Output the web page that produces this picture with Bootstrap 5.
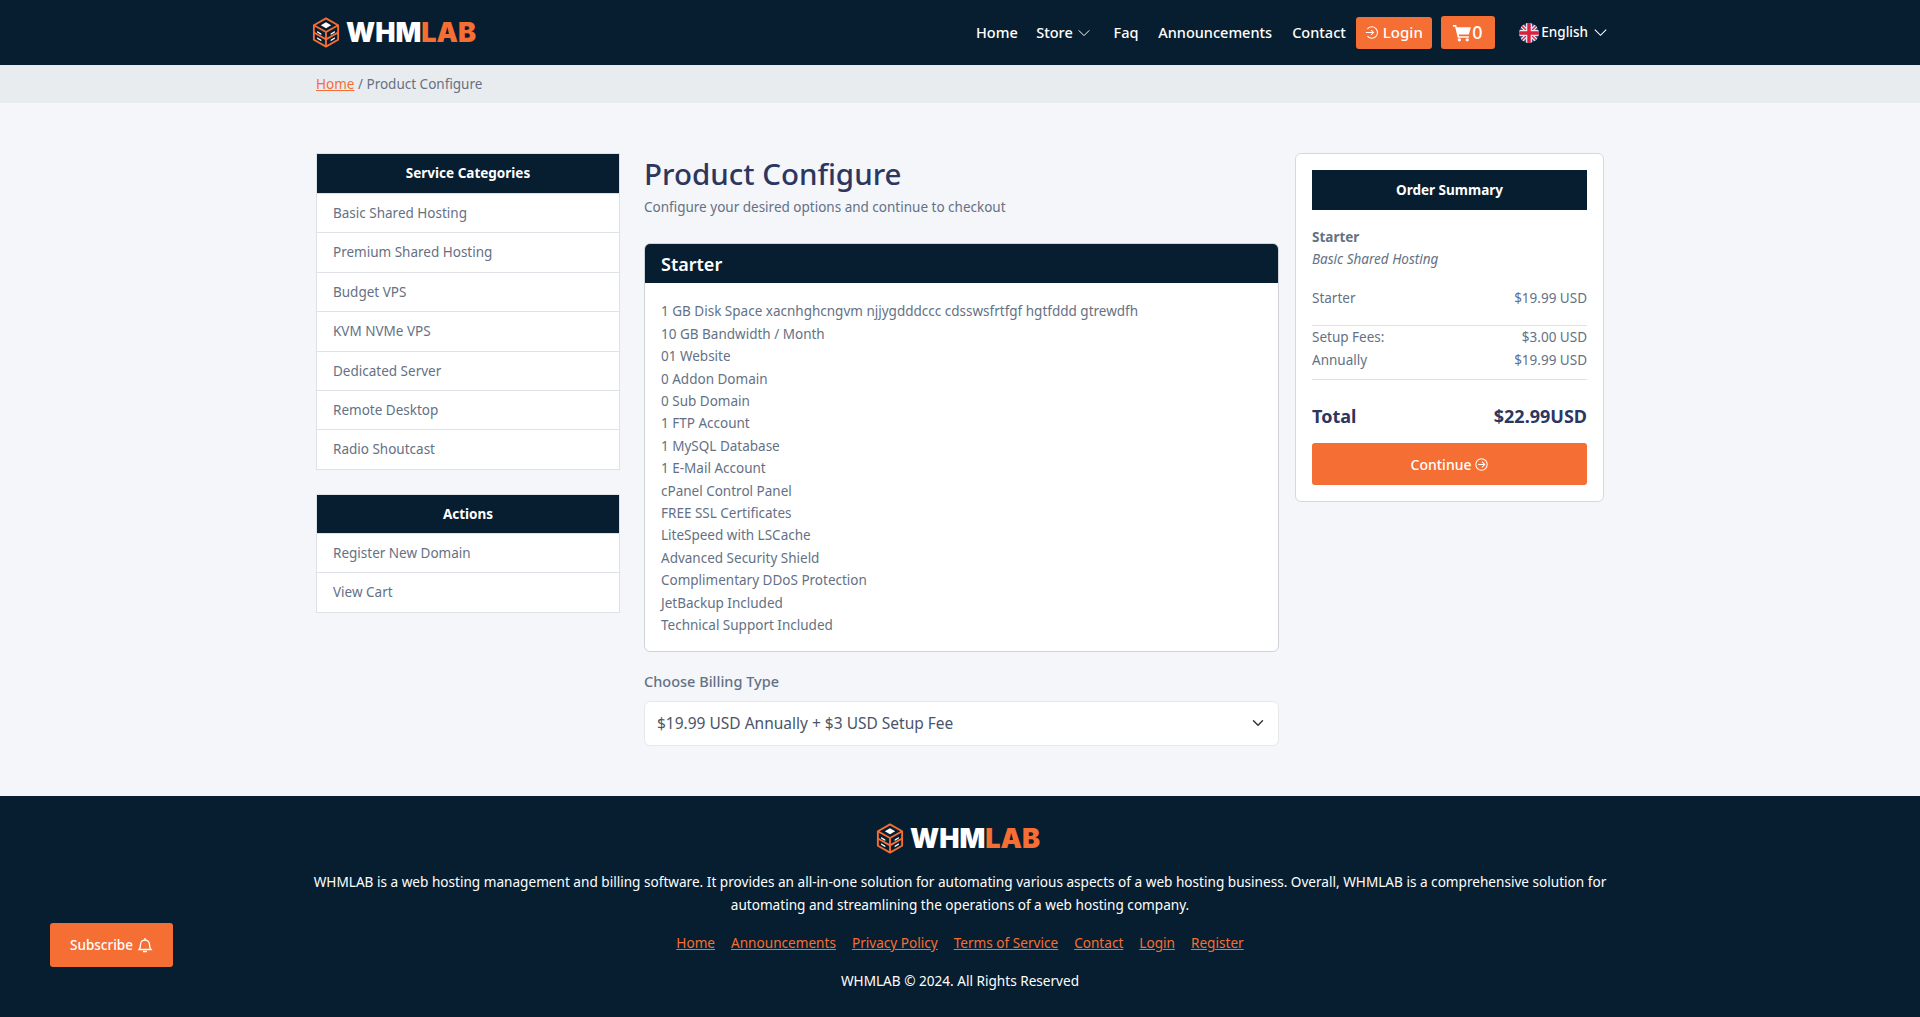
<!DOCTYPE html>
<html lang="en">
<head>
<meta charset="utf-8">
<title>Product Configure</title>
<link href="https://cdn.jsdelivr.net/npm/bootstrap@5.3.0/dist/css/bootstrap.min.css" rel="stylesheet">
<style>
:root{--navy:#071e30;--orange:#f56e33;--txt:#647185;--ttl:#2d3660;}
body{font-family:"Noto Sans","Liberation Sans",sans-serif;font-size:13.5px;line-height:22.4px;color:var(--txt);background:#f4f6fa;}
.wrap{width:1288px;margin:0 auto;}
.topbar{background:var(--navy);height:65px;}
.brand{font-family:"Inter","Liberation Sans",sans-serif;font-weight:900;font-size:27px;line-height:1;color:#fff;text-decoration:none;margin-left:-4px;}
.brand span{color:var(--orange);}
.brandtxt{margin-left:6px;}
.topnav{margin-right:-3px;}
.topnav a.lnk{color:#fff;text-decoration:none;font-size:14.5px;font-weight:500;}
.topnav a.navhome{margin-right:18.5px;}
.topnav a.navstore{margin-right:22.5px;}
.topnav a.navfaq{margin-right:19.7px;}
.topnav a.navann{margin-right:20px;}
.storechev{margin-left:4.3px;}
.btn-org{background:var(--orange);color:#fff;border:0;border-radius:3px;font-weight:500;font-size:15px;padding:0;}
.btn-org:hover{background:var(--orange);color:#fff;}
.navlogin{width:76px;height:32px;margin-left:10px;}
.navlogin svg{margin-right:5px;}
.navcart{width:54px;height:33px;margin-left:9px;font-size:18px;}
.topnav a.navlang{margin-left:24px;font-size:13.5px;}
.flag{margin-right:2.5px;}
.langchev{margin-left:6px;}
.crumb{background:#e9ecef;height:38px;}
.crumb a{color:var(--orange);}
.content{padding:50px 0;}
.cols{display:flex;align-items:flex-start;}
.side{width:304px;margin-right:24px;}
.mid{width:635px;margin-right:16px;}
.sum{width:309px;}
.sidecard{border-radius:0;border:1px solid #dee2e6;margin-bottom:24px;}
.sidehead{background:var(--navy);color:#fff;font-weight:700;text-align:center;height:39px;border-radius:0;}
.sidecard.mb-0 .sidehead{height:38px;}
.sidecard .list-group-item{padding:8px 16px;color:var(--txt);font-size:13.5px;border-color:#dee2e6;}
.pagetitle{font-size:29.5px;line-height:38px;font-weight:500;color:var(--ttl);margin:2px 0 3px;}
.subtitle{margin-bottom:25px;}
.prodcard{border:1px solid #cfd3d8;border-radius:6px;overflow:hidden;margin-bottom:18px;}
.prodhead{background:var(--navy);color:#fff;font-weight:600;font-size:18px;height:39px;padding:0 16px;border-radius:0;}
.prodbody{padding:17px 16px 14px;}
.billing{font-weight:500;font-size:14.5px;margin-bottom:9px;display:block;}
.billsel{height:45px;border:1px solid #e6e8ec;border-radius:6px;color:#4a5568;font-size:15.5px;padding-left:12px;}
.sumcard{border:1px solid #d5d8dd;border-radius:6px;padding:16px;height:349px;}
.sumhead{background:var(--navy);color:#fff;font-weight:700;height:40px;margin-bottom:16px;}
.sumname{font-weight:700;}
.rule{border-top:1px solid #dfe1e5;}
.total{font-size:18px;font-weight:700;color:var(--ttl);line-height:29px;margin:22px 0 12px;}
.contbtn{height:42px;width:100%;font-size:14px;}
.site-foot{background:var(--navy);color:#fff;height:221px;padding-top:27px;text-align:center;font-size:13.6px;}
.footp{margin:11px -8px 16px;}
.flinks{gap:16px;margin-bottom:15px;}
.flinks a{color:var(--orange);}
.subscribe{position:fixed;left:50px;top:923px;width:123px;height:44px;font-size:13.5px;}
svg{flex-shrink:0;}
</style>
</head>
<body>
<nav class="topbar">
 <div class="wrap d-flex align-items-center justify-content-between h-100">
  <a class="brand d-flex align-items-center" href="#">
   <svg width="28" height="31" viewBox="0 0 30 32" preserveAspectRatio="none" fill="none" stroke="#f56e33" stroke-width="2" stroke-linejoin="round"><path d="M15 1.5 28 8.5V23.5L15 30.5 2 23.5V8.5Z"/><path d="M2 8.5 15 15.5 28 8.5M15 15.5V30.5M2 16 15 23 28 16"/><path d="M15 5.5 20.5 8.5 15 11.5 9.5 8.5Z" fill="#fff" stroke="none"/><path d="M5.5 14.500 10 17V18.500L5.500 16ZM5.500 21 10 23.500V25L5.500 22.500ZM24.500 14.500 20 17V18.500L24.500 16ZM24.500 21 20 23.500V25L24.500 22.500Z" fill="#fff" stroke="none"/></svg>
   <div class="brandtxt">WHM<span>LAB</span></div>
  </a>
  <div class="topnav d-flex align-items-center">
   <a class="lnk navhome" href="#">Home</a>
   <a class="lnk navstore d-flex align-items-center" href="#">Store<svg class="storechev" width="14" height="14" viewBox="0 0 16 16" fill="none" stroke="#fff" stroke-width="1.100"><path d="M2 5l6 6 6-6"/></svg></a>
   <a class="lnk navfaq" href="#">Faq</a>
   <a class="lnk navann" href="#">Announcements</a>
   <a class="lnk" href="#">Contact</a>
   <a class="btn btn-org d-flex align-items-center justify-content-center navlogin" href="#"><svg width="13" height="13" viewBox="0 0 16 16" fill="none" stroke="#fff" stroke-width="1.300"><path d="M3 3.500A7 7 0 1 1 3 12.500M1 8h9M7.500 5l3 3-3 3"/></svg>Login</a>
   <a class="btn btn-org d-flex align-items-center justify-content-center navcart" href="#"><svg width="19" height="18" viewBox="0 0 18 17" fill="#fff"><path d="M0 1h3l.6 2H17l-2 7H5.500l.4 1.500H15V13H4.500L2 2.500H0Z"/><circle cx="6" cy="15" r="1.600"/><circle cx="13.500" cy="15" r="1.600"/></svg>0</a>
   <a class="lnk d-flex align-items-center navlang" href="#"><svg class="flag" width="20" height="20" viewBox="0 0 20 20"><defs><clipPath id="c"><circle cx="10" cy="10" r="10"/></clipPath></defs><g clip-path="url(#c)"><rect width="20" height="20" fill="#3a4f8f"/><path d="M0 0 20 20M20 0 0 20" stroke="#e8e8ee" stroke-width="4"/><path d="M0 0 20 20M20 0 0 20" stroke="#d8304a" stroke-width="1.300"/><path d="M10 0V20M0 10H20" stroke="#e8e8ee" stroke-width="6"/><path d="M10 0V20M0 10H20" stroke="#d8203f" stroke-width="3.400"/></g></svg><span>English</span><svg class="langchev" width="13" height="13" viewBox="0 0 16 16" fill="none" stroke="#fff" stroke-width="1.300"><path d="M1 4.500l7 7 7-7"/></svg></a>
  </div>
 </div>
</nav>
<div class="crumb"><div class="wrap d-flex align-items-center h-100"><span><a href="#">Home</a> / Product Configure</span></div></div>
<main class="content">
 <div class="wrap cols">
  <aside class="side">
   <div class="card sidecard">
    <div class="sidehead d-flex align-items-center justify-content-center">Service Categories</div>
    <div class="list-group list-group-flush">
     <a class="list-group-item" href="#">Basic Shared Hosting</a>
     <a class="list-group-item" href="#">Premium Shared Hosting</a>
     <a class="list-group-item" href="#">Budget VPS</a>
     <a class="list-group-item" href="#">KVM NVMe VPS</a>
     <a class="list-group-item" href="#">Dedicated Server</a>
     <a class="list-group-item" href="#">Remote Desktop</a>
     <a class="list-group-item" href="#">Radio Shoutcast</a>
    </div>
   </div>
   <div class="card sidecard mb-0">
    <div class="sidehead d-flex align-items-center justify-content-center">Actions</div>
    <div class="list-group list-group-flush">
     <a class="list-group-item" href="#">Register New Domain</a>
     <a class="list-group-item" href="#">View Cart</a>
    </div>
   </div>
  </aside>
  <section class="mid">
   <h1 class="pagetitle">Product Configure</h1>
   <p class="subtitle">Configure your desired options and continue to checkout</p>
   <div class="card prodcard">
    <div class="prodhead d-flex align-items-center">Starter</div>
    <div class="prodbody">
     1 GB Disk Space xacnhghcngvm njjygdddccc cdsswsfrtfgf hgtfddd gtrewdfh<br>10 GB Bandwidth / Month<br>01 Website<br>0 Addon Domain<br>0 Sub Domain<br>1 FTP Account<br>1 MySQL Database<br>1 E-Mail Account<br>cPanel Control Panel<br>FREE SSL Certificates<br>LiteSpeed with LSCache<br>Advanced Security Shield<br>Complimentary DDoS Protection<br>JetBackup Included<br>Technical Support Included
    </div>
   </div>
   <label class="billing" for="bill">Choose Billing Type</label>
   <select id="bill" class="form-select billsel"><option>$19.99 USD Annually + $3 USD Setup Fee</option></select>
  </section>
  <aside class="sum">
   <div class="card sumcard">
    <div class="sumhead d-flex align-items-center justify-content-center">Order Summary</div>
    <div class="sumname">Starter</div>
    <div class="fst-italic mb-3">Basic Shared Hosting</div>
    <div class="d-flex justify-content-between pb-3"><span>Starter</span><span>$19.99 USD</span></div>
    <div class="rule d-flex justify-content-between"><span>Setup Fees:</span><span>$3.00 USD</span></div>
    <div class="d-flex justify-content-between pb-2"><span>Annually</span><span>$19.99 USD</span></div>
    <div class="rule"></div>
    <div class="total d-flex justify-content-between"><span>Total</span><span>$22.99USD</span></div>
    <a class="btn btn-org contbtn d-flex align-items-center justify-content-center" href="#">Continue<svg class="ms-1" width="13" height="13" viewBox="0 0 16 16" fill="none" stroke="#fff" stroke-width="1.300"><circle cx="8" cy="8" r="7"/><path d="M4 8h8M8.500 4.500 12 8l-3.500 3.500"/></svg></a>
   </div>
  </aside>
 </div>
</main>
<footer class="site-foot">
 <div class="wrap">
  <a class="brand d-inline-flex align-items-center" href="#">
   <svg width="28" height="31" viewBox="0 0 30 32" preserveAspectRatio="none" fill="none" stroke="#f56e33" stroke-width="2" stroke-linejoin="round"><path d="M15 1.5 28 8.5V23.5L15 30.5 2 23.5V8.5Z"/><path d="M2 8.5 15 15.5 28 8.5M15 15.5V30.5M2 16 15 23 28 16"/><path d="M15 5.5 20.5 8.5 15 11.5 9.5 8.5Z" fill="#fff" stroke="none"/><path d="M5.500 14.500 10 17V18.500L5.500 16ZM5.500 21 10 23.500V25L5.500 22.500ZM24.500 14.500 20 17V18.500L24.500 16ZM24.500 21 20 23.500V25L24.500 22.500Z" fill="#fff" stroke="none"/></svg>
   <div class="brandtxt">WHM<span>LAB</span></div>
  </a>
  <p class="footp">WHMLAB is a web hosting management and billing software. It provides an all-in-one solution for automating various aspects of a web hosting business. Overall, WHMLAB is a comprehensive solution for automating and streamlining the operations of a web hosting company.</p>
  <div class="flinks d-flex justify-content-center"><a href="#">Home</a><a href="#">Announcements</a><a href="#">Privacy Policy</a><a href="#">Terms of Service</a><a href="#">Contact</a><a href="#">Login</a><a href="#">Register</a></div>
  <div>WHMLAB © 2024. All Rights Reserved</div>
 </div>
</footer>
<a class="btn btn-org subscribe d-flex align-items-center justify-content-center" href="#">Subscribe<svg class="ms-1" width="16" height="16" viewBox="0 0 16 16" fill="none" stroke="#fff" stroke-width="1.300"><path d="M2 12.500c1.500-1.500 1.500-3 1.500-5a4.500 4.500 0 0 1 9 0c0 2 0 3.500 1.500 5ZM6 14.500h4M8 1v1.500"/></svg></a>
<script src="https://cdn.jsdelivr.net/npm/bootstrap@5.3.0/dist/js/bootstrap.bundle.min.js"></script>
</body>
</html>
